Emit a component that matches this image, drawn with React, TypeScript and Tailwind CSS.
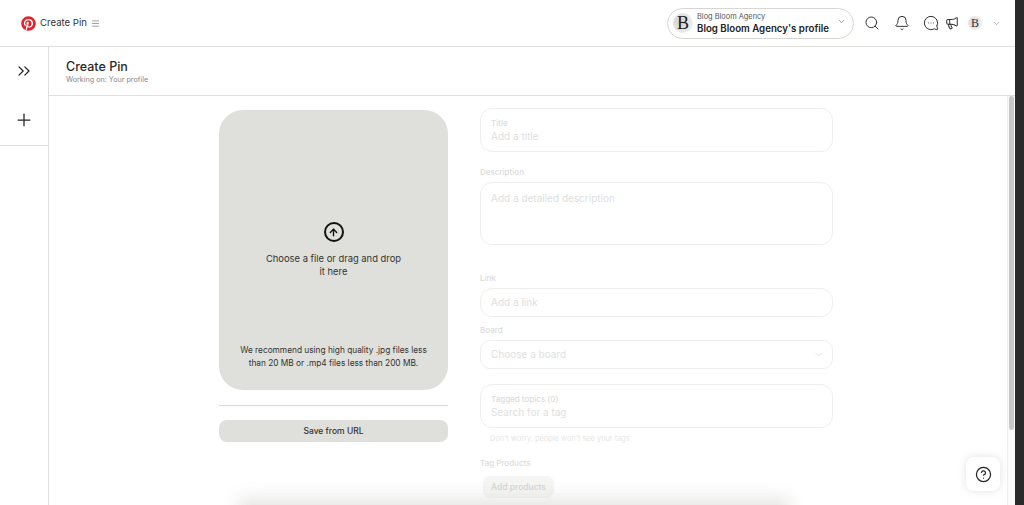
import React from 'react';
import { ArrowUp, Bell, ChevronDown, ChevronsRight, CircleHelp, Megaphone, Menu, MessageCircleMore, Plus, Search } from 'lucide-react';
import { FaPinterest } from 'react-icons/fa';

const Avatar: React.FC<{ large?: boolean }> = ({ large }) => (
  <div
    className={
      large
        ? 'w-[20px] h-[20px] rounded-full bg-[radial-gradient(circle_at_35%_45%,#cfcfcd,#efefed_75%)] flex items-center justify-center font-["Liberation_Serif",serif] text-[18px] leading-none text-[#222] shrink-0'
        : 'w-[14px] h-[14px] rounded-full bg-[radial-gradient(circle_at_35%_45%,#d8d8d6,#f0f0ee_75%)] flex items-center justify-center font-["Liberation_Serif",serif] text-[12px] leading-none text-[#333] shrink-0'
    }
  >
    B
  </div>
);

const Label: React.FC<{ children: React.ReactNode; className?: string }> = ({ children, className }) => (
  <div className={`text-[8px] leading-[10px] font-medium text-[#dcdcdc] ${className ?? ''}`}>{children}</div>
);

const App: React.FC = () => {
  return (
    <div className='flex w-[1024px] h-[505px] overflow-hidden bg-white font-["Inter",sans-serif]'>
      <div className="w-[1015px] flex flex-col shrink-0">
        {/* Top bar */}
        <header className="h-[47px] shrink-0 border-b border-[#dfdfdc] flex items-center pl-[21px] pr-[14px]">
          <FaPinterest className="w-[15px] h-[15px] text-[#e2232e]" />
          <span className="ml-[4px] text-[9.6px] text-[#333]">Create Pin</span>
          <Menu className="ml-[4px] w-[9px] h-[9px] text-[#555]" strokeWidth={1.5} />

          <div className="ml-auto flex items-center">
            <div className="w-[187px] h-[31px] rounded-full border border-[#d6d6d2] flex items-center pl-[5px] pr-[7px]">
              <Avatar large />
              <div className="ml-[4px] flex-1 min-w-0">
                <div className="text-[7.4px] leading-[10px] text-[#555]">Blog Bloom Agency</div>
                <div className="text-[9.7px] leading-[13px] font-semibold text-[#222] whitespace-nowrap">Blog Bloom Agency's profile</div>
              </div>
              <ChevronDown className="w-[9px] h-[9px] text-[#555] -mt-[4px]" strokeWidth={1.5} />
            </div>
            <Search className="ml-[10px] w-[16px] h-[16px] text-[#333]" strokeWidth={1.5} />
            <Bell className="ml-[14px] w-[16px] h-[16px] text-[#333]" strokeWidth={1.5} />
            <MessageCircleMore className="ml-[13px] w-[16px] h-[16px] text-[#333] -scale-x-100" strokeWidth={1.5} />
            <Megaphone className="ml-[6px] w-[14px] h-[14px] text-[#333]" strokeWidth={1.75} />
            <div className="ml-[9px]">
              <Avatar />
            </div>
            <ChevronDown className="ml-[10px] w-[9px] h-[9px] text-[#777]" strokeWidth={1.5} />
          </div>
        </header>

        <div className="flex-1 flex min-h-0">
          {/* Side rail */}
          <aside className="w-[49px] shrink-0 border-r border-[#dfdfdc] flex flex-col">
            <div className="h-[99px] border-b border-[#dfdfdc] flex flex-col items-center pt-[14px] gap-[29px]">
              <ChevronsRight className="w-[20px] h-[20px] text-[#222]" strokeWidth={1.5} />
              <Plus className="w-[20px] h-[20px] text-[#222]" strokeWidth={1.5} />
            </div>
          </aside>

          <main className="flex-1 flex flex-col min-w-0">
            <div className="h-[49px] shrink-0 border-b border-[#dfdfdc] pl-[17px] pt-[12px]">
              <div className="text-[12.5px] leading-[15px] font-medium text-[#2a2a2a]">Create Pin</div>
              <div className="text-[7.2px] leading-[9px] text-[#888] mt-[1px]">Working on: Your profile</div>
            </div>

            <div className="relative flex-1 min-h-0 flex overflow-hidden">
              {/* Upload column */}
              <div className="ml-[170px] mt-[14px] w-[229px] shrink-0">
                <div className="h-[280px] rounded-[24px] bg-[#dfe0db] flex flex-col items-center">
                  <div className="mt-[112px] w-[20px] h-[20px] rounded-full border-2 border-[#111] flex items-center justify-center">
                    <ArrowUp className="w-[11px] h-[11px] text-[#111]" strokeWidth={3} />
                  </div>
                  <div className="mt-[10px] w-[140px] text-center text-[9.4px] leading-[13px] text-[#333]">
                    Choose a file or drag and drop it here
                  </div>
                  <div className="mt-[66px] text-center text-[8.3px] leading-[13px] text-[#333] whitespace-nowrap">
                    We recommend using high quality .jpg files less
                    <br />
                    than 20 MB or .mp4 files less than 200 MB.
                  </div>
                </div>
                <div className="mt-[15px] border-t border-[#d8d8d4]" />
                <div className="mt-[14px] h-[22px] rounded-[8px] bg-[#dfe0db] flex items-center justify-center text-[8.5px] font-medium text-[#333]">
                  Save from URL
                </div>
              </div>

              {/* Form column */}
              <div className="ml-[32px] mt-[12px] w-[353px] shrink-0">
                <div className="h-[44px] rounded-[12px] border border-[#efefed] px-[10px] pt-[9px]">
                  <Label>Title</Label>
                  <div className="mt-[2px] text-[10px] leading-[13px] text-[#e0e0e0]">Add a title</div>
                </div>
                <Label className="mt-[15px]">Description</Label>
                <div className="mt-[5px] h-[63px] rounded-[12px] border border-[#efefed] px-[10px] pt-[9px] text-[10px] leading-[13px] text-[#e0e0e0]">
                  Add a detailed description
                </div>
                <Label className="mt-[28px]">Link</Label>
                <div className="mt-[5px] h-[29px] rounded-[12px] border border-[#efefed] px-[10px] flex items-center text-[10px] text-[#e0e0e0]">
                  Add a link
                </div>
                <Label className="mt-[8px]">Board</Label>
                <div className="mt-[5px] h-[29px] rounded-[10px] border border-[#efefed] pl-[10px] pr-[8px] flex items-center justify-between text-[10px] text-[#e0e0e0]">
                  Choose a board
                  <ChevronDown className="w-[11px] h-[11px] text-[#d8d8d8]" strokeWidth={1.5} />
                </div>
                <div className="mt-[15px] h-[44px] rounded-[12px] border border-[#efefed] px-[10px] pt-[9px]">
                  <Label>Tagged topics (0)</Label>
                  <div className="mt-[2px] text-[10px] leading-[13px] text-[#e0e0e0]">Search for a tag</div>
                </div>
                <div className="mt-[6px] ml-[10px] text-[7.4px] leading-[10px] text-[#e6e6e6]">Don't worry, people won't see your tags</div>
                <Label className="mt-[14px]">Tag Products</Label>
                <div className="mt-[8px] ml-[3px] w-[71px] h-[22px] rounded-[7px] bg-[#f5f5f3] flex items-center justify-center text-[8.5px] font-medium text-[#d4d4d4]">
                  Add products
                </div>
              </div>

              {/* Shadow of the sticky bar below the fold */}
              <div className="absolute left-[200px] bottom-[-8px] w-[530px] h-[6px] bg-[#d8d8d6] shadow-[0_0_16px_10px_rgba(205,205,200,0.45)]" />

              {/* Help button */}
              <div className="absolute left-[917px] top-[361px] w-[34px] h-[34px] rounded-[8px] bg-white shadow-[0_0_8px_rgba(0,0,0,0.12)] flex items-center justify-center">
                <CircleHelp className="w-[17px] h-[17px] text-[#222]" strokeWidth={1.75} />
              </div>

              {/* Scrollbar */}
              <div className="absolute right-0 top-0 bottom-0 w-[8px] bg-[#fafafa] border-l border-[#efefef]">
                <div className="ml-[1px] w-[5px] h-[334px] rounded-full bg-[#c8c8c8]" />
              </div>
            </div>
          </main>
        </div>
      </div>
      <div className="flex-1 bg-[#2a2a2a]" />
    </div>
  );
};

export default App;
